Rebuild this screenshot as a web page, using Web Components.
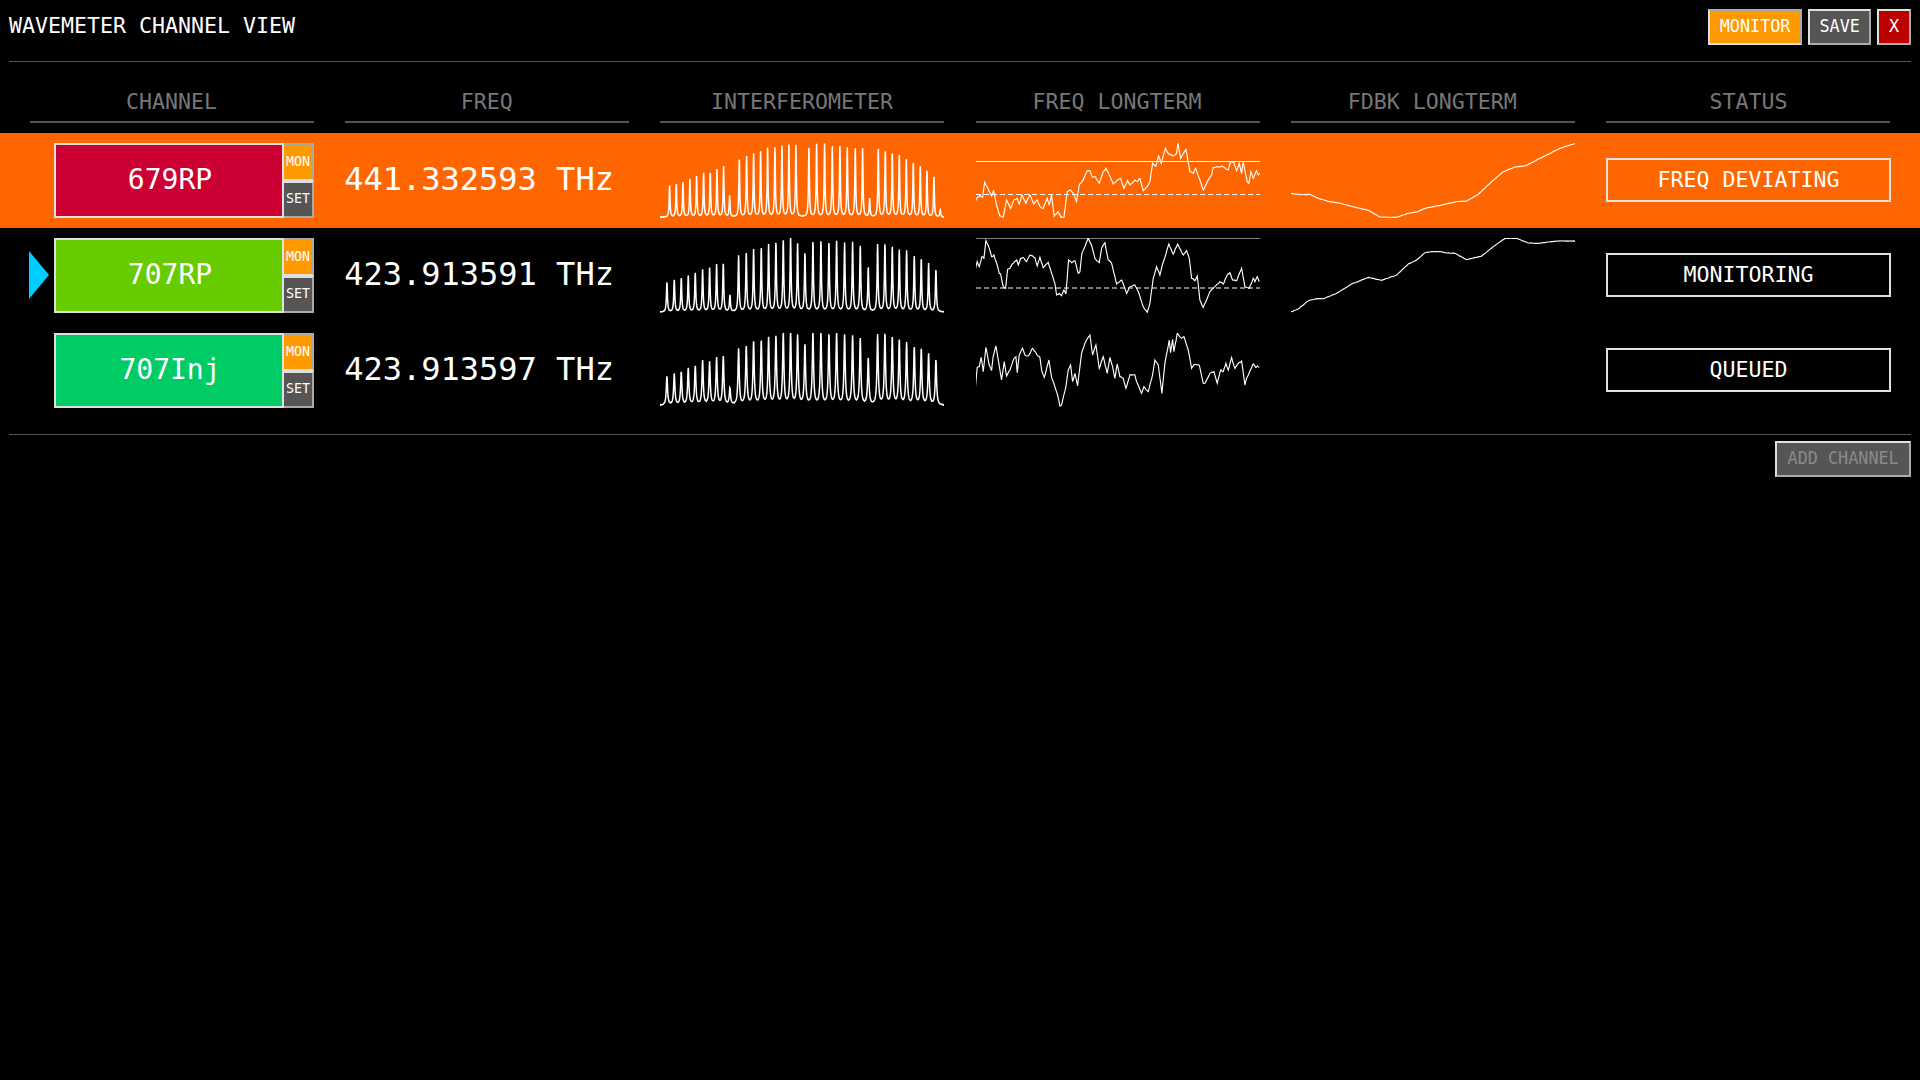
<!DOCTYPE html>
<html><head><meta charset="utf-8"><title>Wavemeter</title>
<style>
html,body{margin:0;padding:0;background:#000;height:100%}
body{font-family:"DejaVu Sans Mono","Liberation Mono",monospace;color:#fff;overflow:hidden}
</style></head>
<body>
<wm-app></wm-app>
<script>
const FONT='"DejaVu Sans Mono","Liberation Mono",monospace';
function rng(seed){let s=seed;return()=>{s=(s*1664525+1013904223)>>>0;return s/4294967296-0.5}}

class WmButton extends HTMLElement{
  constructor(){super();const r=this.attachShadow({mode:'open'});
  r.innerHTML=`<style>
  :host{display:inline-flex;box-sizing:border-box;height:36px;padding:0 10px 2px;align-items:center;justify-content:center;
  font-size:16.8px;color:var(--fg,#fff);background:var(--bg,#555);border:2px solid;border-color:#e0e0e0 #aaa #aaa #e0e0e0;white-space:pre}
  :host([flip]){border-color:#aaa #aaa #e0e0e0 #e0e0e0}
  </style><slot></slot>`}
}
customElements.define('wm-button',WmButton);

class WmPlot extends HTMLElement{
  constructor(){super();const r=this.attachShadow({mode:'open'});
  r.innerHTML=`<style>:host{display:block;width:100%;height:75px;overflow:hidden}svg{display:block;width:100%;height:75px;overflow:visible}
  path,line{fill:none;stroke:#fff;stroke-width:var(--sw,1.15)}line{stroke-width:1}</style><svg></svg>`}
  set data(d){
    const svg=this.shadowRoot.querySelector('svg');
    const w=284;svg.setAttribute('viewBox',`0 0 ${w} 75`);svg.setAttribute('preserveAspectRatio','none');
    let h='';
    (d.lines||[]).forEach(l=>{h+=`<line x1="0" x2="${w}" y1="${l.y}" y2="${l.y}"${l.dash?' stroke-dasharray="5 3"':''}/>`});
    h+=`<path d="${d.path}"/>`;
    svg.innerHTML=h;
  }
}
customElements.define('wm-plot',WmPlot);

class WmChannel extends HTMLElement{
  constructor(){super();const r=this.attachShadow({mode:'open'});
  r.innerHTML=`<style>
  :host{display:flex;height:75px;margin-left:24px;box-sizing:border-box;position:relative}
  .name{flex:1;box-sizing:border-box;border:2px solid #e0e0e0;background:var(--c);display:flex;align-items:center;justify-content:center;font-size:28px;color:#fff;padding:0 0 2px 2px}
  .side{width:30px;flex:none;display:flex;flex-direction:column}
  .b{box-sizing:border-box;border:2px solid;border-left:0;font-size:13.33px;display:flex;align-items:center;justify-content:center}
  .mon{background:#f90;height:38px;border-color:#aaa #aaa #e0e0e0 transparent;padding-bottom:1px}
  .set{background:#555;height:37px;border-color:#e0e0e0 #aaa #aaa transparent;padding-bottom:2px}
  .arrow{position:absolute;left:-25px;top:12.5px;width:0;height:0;border-left:20px solid #0cf;border-top:24px solid transparent;border-bottom:24px solid transparent;display:none}
  :host([active]) .arrow{display:block}
  </style><div class="arrow"></div><div class="name"><slot></slot></div><div class="side"><div class="b mon">MON</div><div class="b set">SET</div></div>`}
}
customElements.define('wm-channel',WmChannel);

class WmStatus extends HTMLElement{
  constructor(){super();const r=this.attachShadow({mode:'open'});
  r.innerHTML=`<style>:host{display:flex;box-sizing:border-box;height:44px;margin:0 -1px 1px 0;border:2px solid #e0e0e0;align-items:center;justify-content:center;font-size:21.6px;color:#fff;white-space:pre;padding-bottom:2px}</style><slot></slot>`}
}
customElements.define('wm-status',WmStatus);

function interf(peaks,base,top,w,seed,fl){
  const r=rng(seed);
  const X=c=>c/3+650-660.4, Y=c=>c/3+130-top;
  const ps=peaks.map(p=>[X(p[0]),(base-p[1])/3]);
  let d='';
  const x0=X(30),x1=X(884);
  for(let x=x0;x<=x1;x+=0.25){
    let v=0;for(const p of ps){const dx=x-p[0];v+=p[1]*w*w/(dx*dx+w*w)}
    const y=Y(base)+.6-v+r()*fl;
    d+=(d?'L':'M')+x.toFixed(2)+' '+y.toFixed(2);
  }
  return d;
}
function trace(pts,ox,top,noise,seed){
  const r=rng(seed);
  let d='';const out=[];
  for(let i=0;i<pts.length-1;i++){
    const [a,b]=pts[i],[c,e]=pts[i+1];
    const n=Math.max(1,Math.round((c-a)/3));
    for(let k=0;k<n;k++){const t=k/n;out.push([a+(c-a)*t,b+(e-b)*t,k])}
  }
  out.push(pts[pts.length-1]);
  out.forEach((p,i)=>{
    const x=p[0]/3+ox;const y=p[1]/3+130-top+(p[2]?r()*noise:0);
    d+=(i?'L':'M')+x.toFixed(2)+' '+y.toFixed(2);
  });
  return d;
}
const xs=[60,80,100,121,141,162,182,202,222,240,269,291,312,333,354,376,397,418,439,478,501,525,548,571,593,617,639,660,686,707,728,749,770,791,812,832,853,872];
const i1=[165,160,153,144,138,129,126,114,109,196,84,78,71,65,55,47,42,39,39,48,42,42,44,42,47,50,55,205,51,60,66,71,83,95,105,119,137,238].map((t,i)=>[xs[i],t]);
const i2=[[52,455],[74,447],[95,443],[116,435],[137,426],[159,418],[180,414],[201,403],[221,399],[241,495],[267,376],[290,367],[312,358],[335,352],[357,344],[379,336],[401,329],[423,324],[444,342],[466,368],[490,333],[514,331],[538,337],[561,334],[585,339],[609,337],[632,345],[656,410],[684,343],[706,340],[728,348],[749,357],[771,362],[794,376],[815,385],[837,400],[859,417]];
const i3=[[52,738],[74,731],[95,726],[116,714],[137,708],[159,693],[180,697],[201,685],[221,678],[241,776],[267,657],[290,649],[312,638],[335,633],[357,625],[379,619],[401,611],[423,609],[444,618],[466,645],[490,609],[514,610],[538,614],[561,610],[585,617],[609,620],[632,625],[656,685],[684,616],[706,613],[728,623],[749,631],[771,640],[794,653],[815,658],[837,673],[859,690]];
const f1=[[45,217],[52,203],[60,197],[68,202],[74,157],[85,178],[95,198],[101,180],[110,225],[120,258],[130,262],[140,210],[152,235],[162,210],[172,205],[178,222],[186,195],[198,220],[210,195],[222,222],[232,210],[240,230],[250,235],[262,205],[268,225],[275,195],[283,258],[295,245],[303,262],[312,262],[322,185],[332,180],[340,190],[350,215],[358,165],[370,150],[382,122],[390,122],[398,142],[406,140],[418,160],[430,125],[438,115],[448,135],[460,162],[472,150],[482,145],[492,175],[503,152],[510,165],[525,150],[532,155],[540,145],[550,182],[562,170],[570,155],[578,100],[588,108],[596,78],[604,100],[617,55],[625,70],[640,78],[650,70],[654,40],[662,85],[678,58],[690,125],[700,130],[707,115],[720,150],[730,180],[745,150],[755,135],[760,112],[770,110],[790,110],[805,120],[812,95],[822,97],[830,122],[838,100],[845,130],[850,97],[862,155],[867,160],[873,125],[880,145],[890,122],[895,135],[900,130]];
const f2=[[45,425],[52,395],[58,410],[66,380],[72,385],[78,332],[88,355],[95,380],[102,375],[112,405],[118,430],[122,432],[130,470],[137,475],[143,418],[150,415],[157,402],[170,390],[175,405],[182,385],[190,383],[200,395],[210,375],[225,383],[232,408],[240,382],[250,413],[265,397],[275,430],[285,460],[290,495],[298,490],[305,497],[312,480],[318,492],[326,390],[335,398],[345,392],[355,430],[360,425],[366,370],[385,325],[395,345],[405,385],[418,398],[425,355],[435,338],[445,390],[455,400],[465,440],[470,462],[485,450],[490,462],[500,490],[510,470],[525,465],[535,485],[550,530],[562,547],[570,520],[580,445],[590,410],[600,435],[606,410],[612,390],[627,342],[640,372],[653,342],[670,375],[680,362],[688,385],[695,445],[705,452],[712,438],[720,510],[730,532],[740,510],[750,485],[765,470],[780,455],[790,462],[802,435],[810,428],[818,450],[830,452],[845,415],[855,470],[868,475],[880,445],[885,455],[892,440],[898,455]];
const f3=[[45,788],[52,712],[58,710],[64,682],[70,725],[78,652],[88,705],[95,722],[100,678],[108,648],[116,695],[125,750],[133,695],[140,738],[150,720],[160,690],[168,680],[172,728],[178,675],[188,655],[195,675],[205,678],[218,655],[232,675],[240,682],[245,720],[253,742],[267,690],[275,742],[285,770],[293,795],[300,828],[305,825],[318,770],[325,720],[332,705],[338,755],[345,730],[353,768],[365,670],[375,640],[380,630],[390,615],[398,675],[408,645],[418,715],[430,680],[442,730],[450,682],[458,710],[465,745],[472,702],[480,740],[490,745],[498,775],[510,735],[525,735],[530,755],[545,790],[552,770],[565,785],[578,735],[585,690],[595,705],[606,790],[615,700],[628,630],[632,668],[638,628],[642,665],[652,610],[665,625],[672,620],[685,660],[695,715],[703,703],[718,705],[730,760],[735,760],[750,730],[762,725],[772,760],[782,720],[790,725],[798,700],[805,720],[815,683],[825,715],[835,700],[845,693],[855,765],[860,745],[880,702],[887,712],[892,708],[898,712]];
const d1=[[30,190],[60,194],[90,193],[115,205],[145,214],[180,220],[230,233],[265,241],[300,261],[350,262],[385,250],[410,246],[435,235],[475,227],[530,215],[560,213],[595,193],[635,155],[670,125],[705,111],[735,108],[780,85],[840,55],[887,40]];
const d2=[[30,547],[55,537],[85,512],[110,506],[130,506],[170,490],[215,462],[265,442],[305,451],[350,435],[385,402],[410,390],[435,368],[455,365],[480,365],[500,369],[525,370],[560,389],[605,378],[640,350],[675,325],[710,325],[745,339],[775,340],[830,333],[887,333]];

const FOX=960-976.1, DOX=1280-1291;
const ROWS=[
 {name:'679RP',c:'#c03',freq:'441.332593 THz',status:'FREQ DEVIATING',row:'#f60',
  i:interf(i1,260,143,.5,1,.3),
  f:trace(f1,FOX,143,1.1,3),fl:[{y:18.5},{y:51.5,dash:1}],
  d:trace(d1,DOX,143,.35,5)},
 {name:'707RP',c:'#6c0',freq:'423.913591 THz',status:'MONITORING',active:1,
  i:interf(i2,545,238,.58,2,.3),
  f:trace(f2,FOX,238,1.1,7),fl:[{y:0},{y:50,dash:1}],
  d:trace(d2,DOX,238,.35,9)},
 {name:'707Inj',c:'#0c6',freq:'423.913597 THz',status:'QUEUED',
  i:interf(i3,825,333,.75,4,.4),
  f:trace(f3,FOX,333,1.1,11),fl:[]},
];
const HEADS=['CHANNEL','FREQ','INTERFEROMETER','FREQ LONGTERM','FDBK LONGTERM','STATUS'];

class WmRow extends HTMLElement{
  constructor(){super();const r=this.attachShadow({mode:'open'});
  r.innerHTML=`<style>
  :host{display:grid;grid-template-columns:repeat(6,1fr);column-gap:31.2px;padding:10px 30px;height:95px;box-sizing:border-box;align-items:center;background:var(--rowbg,#000)}
  .freq{font-size:32px;white-space:pre;color:#fff;margin:0 0 4px -1px}
  #i{--sw:1.5}
  </style><div id="c"></div><div class="freq"></div><div id="i"></div><div id="f"></div><div id="d"></div><div id="s"></div>`}
  set data(d){
    const q=s=>this.shadowRoot.querySelector(s);
    if(d.row)this.style.setProperty('--rowbg',d.row);
    const ch=document.createElement('wm-channel');ch.textContent=d.name;ch.style.setProperty('--c',d.c);if(d.active)ch.setAttribute('active','');q('#c').append(ch);
    q('.freq').textContent=d.freq;
    const a=document.createElement('wm-plot');q('#i').append(a);a.data={path:d.i};
    const b=document.createElement('wm-plot');q('#f').append(b);b.data={path:d.f,lines:d.fl};
    if(d.d){const e=document.createElement('wm-plot');q('#d').append(e);e.data={path:d.d}}
    const s=document.createElement('wm-status');s.textContent=d.status;q('#s').append(s);
  }
}
customElements.define('wm-row',WmRow);

class WmApp extends HTMLElement{
  constructor(){super();const r=this.attachShadow({mode:'open'});
  r.innerHTML=`<style>
  :host{display:block;font-family:${FONT};color:#fff;background:#000;min-height:1080px}
  .top{display:flex;justify-content:space-between;align-items:flex-start;margin:0 9px;height:61px;border-bottom:1px solid #555}
  h1{margin:0;font-weight:400;font-size:21.6px;line-height:24px;padding-top:14px;white-space:pre}
  .btns{display:flex;gap:6px;padding-top:9px}
  .heads{display:grid;grid-template-columns:repeat(6,1fr);column-gap:31.2px;padding:0 30px;margin-top:25px;height:36px;margin-bottom:10px}
  .h{box-sizing:border-box;border-bottom:2px solid #555;text-align:center;color:#777;font-size:21.6px;line-height:30px;white-space:pre;height:36px;padding-right:1px}
  .h:last-child{padding:0 0 0 1px}
  .foot{margin:16px 9px 0;border-top:1px solid #555;display:flex;justify-content:flex-end;padding-top:6px}
  .add{--bg:#555;--fg:#8a8a8a}
  </style>
  <div class="top"><h1>WAVEMETER CHANNEL VIEW</h1><div class="btns">
    <wm-button flip style="--bg:#f90">MONITOR</wm-button><wm-button style="--bg:#555;padding:0 9px 2px">SAVE</wm-button><wm-button style="--bg:#b00">X</wm-button></div></div>
  <div class="heads">${HEADS.map(h=>`<div class="h">${h}</div>`).join('')}</div>
  <div id="rows"></div>
  <div class="foot"><wm-button class="add" style="padding:0 10.3px 2px">ADD CHANNEL</wm-button></div>`;
  const rows=r.getElementById('rows');
  ROWS.forEach(d=>{const e=document.createElement('wm-row');rows.append(e);e.data=d});
  }
}
customElements.define('wm-app',WmApp);
</script>
</body></html>
